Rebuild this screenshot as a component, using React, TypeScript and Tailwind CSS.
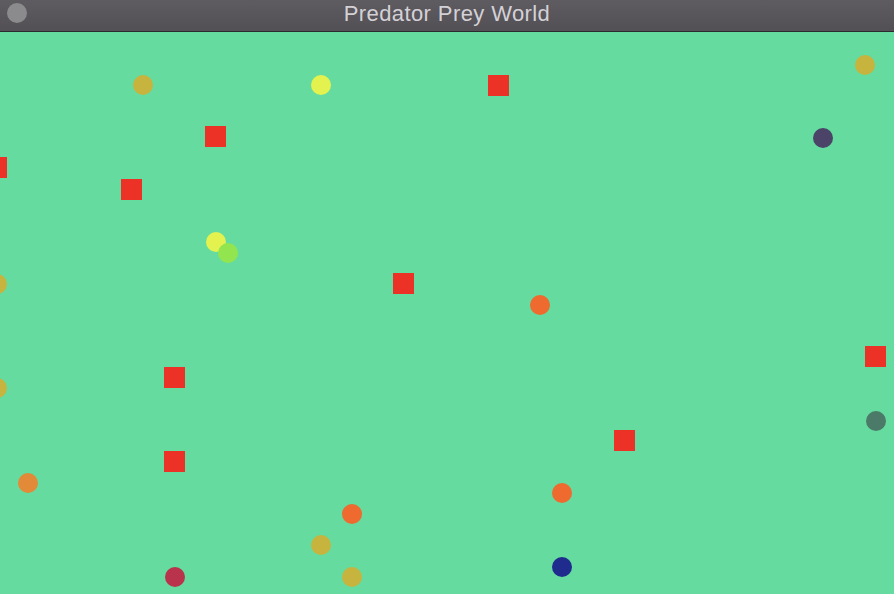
import React from 'react';

type Dot = { x: number; y: number; c: string };

// circle centres in page coordinates (diameter 20)
const prey: Dot[] = [
  { x: 143, y: 85, c: '#c6b43e' },
  { x: 321, y: 85, c: '#e4f250' },
  { x: 865, y: 65, c: '#c6b43e' },
  { x: 823, y: 138, c: '#4b4468' },
  { x: 216, y: 242, c: '#e4f250' },
  { x: 228, y: 253, c: '#92e54f' },
  { x: -3, y: 284, c: '#c6b43e' },
  { x: 540, y: 305, c: '#ee6a2e' },
  { x: -3, y: 388, c: '#c6b43e' },
  { x: 876, y: 421, c: '#4b7a68' },
  { x: 28, y: 483, c: '#e28a38' },
  { x: 562, y: 493, c: '#ee6a2e' },
  { x: 352, y: 514, c: '#ee6a2e' },
  { x: 321, y: 545, c: '#c6b43e' },
  { x: 352, y: 577, c: '#c6b43e' },
  { x: 175, y: 577, c: '#b8334b' },
  { x: 562, y: 567, c: '#1f2c8e' },
];

// square top-left corners in page coordinates (21x21)
const predators = [
  [488, 75],
  [205, 126],
  [-14, 157],
  [121, 179],
  [393, 273],
  [164, 367],
  [865, 346],
  [614, 430],
  [164, 451],
];

const BAR = 32;

export default function App() {
  return (
    <div className="w-[894px] h-[594px] flex flex-col overflow-hidden bg-[#65db9f]">
      {/* Title bar */}
      <div className="relative h-[32px] shrink-0 flex items-center justify-center bg-gradient-to-b from-[#5e5b61] to-[#524f55] border-b border-[#2b2a2c]">
        <div className="absolute left-[7px] top-[3px] w-[20px] h-[20px] rounded-full bg-[#8b8a8c]" />
        <span className="text-[22px] leading-none tracking-[0.4px] pb-[3px] text-[#d4d1d6] font-['Liberation_Sans',Arial,sans-serif]">
          Predator Prey World
        </span>
      </div>

      {/* World */}
      <div className="relative flex-1">
        {prey.map((d, i) => (
          <div
            key={'c' + i}
            className="absolute w-[20px] h-[20px] rounded-full"
            style={{ left: d.x - 10, top: d.y - 10 - BAR, background: d.c }}
          />
        ))}
        {predators.map(([x, y], i) => (
          <div
            key={'s' + i}
            className="absolute w-[21px] h-[21px] bg-[#ec3226]"
            style={{ left: x, top: y - BAR }}
          />
        ))}
      </div>
    </div>
  );
}
